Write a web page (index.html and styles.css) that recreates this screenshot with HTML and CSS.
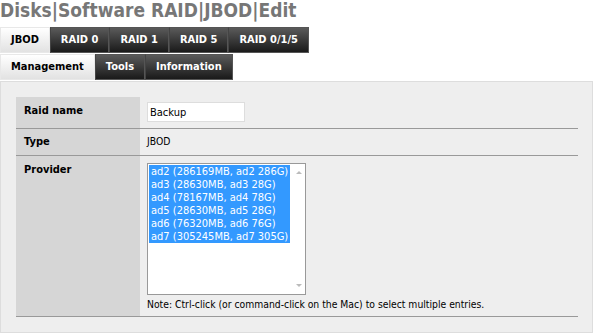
FILE: index.html
```html
<!DOCTYPE html>
<html lang="en">
<head>
    <meta charset="UTF-8">
    <title>Disks | Software RAID | JBOD | Edit</title>
    <link rel="stylesheet" href="styles.css">
</head>
<body>

<h1 class="page-title">Disks|Software RAID|JBOD|Edit</h1>

<ul class="tabs">
    <li class="active">JBOD</li>
    <li>RAID 0</li>
    <li>RAID 1</li>
    <li>RAID 5</li>
    <li>RAID 0/1/5</li>
</ul>
<ul class="tabs">
    <li class="active">Management</li>
    <li>Tools</li>
    <li>Information</li>
</ul>

<div class="panel">
    <table class="form-table">
        <tr>
            <td class="label">Raid name</td>
            <td class="value"><input type="text" class="text-input" value="Backup"></td>
        </tr>
        <tr>
            <td class="label">Type</td>
            <td class="value">JBOD</td>
        </tr>
        <tr>
            <td class="label">Provider</td>
            <td class="value">
                <div class="listbox">
                    <div class="options">
                        <div class="option selected">ad2 (286169MB, ad2 286G)</div>
                        <div class="option selected">ad3 (28630MB, ad3 28G)</div>
                        <div class="option selected">ad4 (78167MB, ad4 78G)</div>
                        <div class="option selected">ad5 (28630MB, ad5 28G)</div>
                        <div class="option selected">ad6 (76320MB, ad6 76G)</div>
                        <div class="option selected">ad7 (305245MB, ad7 305G)</div>
                    </div>
                    <div class="scrollbar">
                        <span class="arrow up"></span>
                        <span class="arrow down"></span>
                    </div>
                </div>
                <div class="note">Note: Ctrl-click (or command-click on the Mac) to select multiple entries.</div>
            </td>
        </tr>
    </table>
</div>

</body>
</html>
```

FILE: styles.css
```css
body {
    font-family: 'DejaVu Sans Condensed', 'DejaVu Sans', sans-serif;
    margin: 0;
    padding: 0;
    background-color: #fff;
    color: #000;
}
.page-title {
    font-size: 19px;
    line-height: 20px;
    color: #777;
    margin: 0 0 7px 0;
    padding: 0;
}
.tabs {
    list-style: none;
    margin: 0 0 1px 0;
    padding: 0;
    display: flex;
}
.tabs li {
    height: 24px;
    line-height: 24px;
    padding: 0 10px;
    font-size: 11px;
    font-weight: bold;
    color: #fff;
    background: linear-gradient(#5a5a5a, #1a1a1a);
    border: 1px solid #555;
    border-left-color: #444;
}
.tabs li.active {
    color: #000;
    background: linear-gradient(#fff, #e2e2e2);
    border-color: #e8e8e8;
}
.panel {
    background-color: #eee;
    border: 1px solid #ddd;
    width: 561px;
    padding: 15px 15px 15px 15px;
}
.form-table {
    width: 562px;
    border-collapse: collapse;
    font-size: 10.3px;
}
.form-table td {
    border-bottom: 1px solid #999;
    vertical-align: top;
}
.form-table .label {
    width: 108px;
    background-color: #d6d6d6;
    font-size: 11px;
    font-weight: bold;
    padding: 7px 8px;
}
.form-table .value {
    padding: 6px 7px;
}
.form-table tr:nth-child(2) td {
    padding-top: 6px;
    padding-bottom: 7px;
}
.text-input {
    width: 92px;
    height: 16px;
    font-family: inherit;
    font-size: 11px;
    border: 1px solid #ddd;
    padding: 1px 2px;
    margin: -1px 0 0 0;
    display: block;
}
.listbox {
    display: flex;
    width: 157px;
    height: 130px;
    border: 1px solid #999;
    background-color: #fff;
    margin-top: 1px;
}
.options {
    flex: 1;
    padding: 1px;
}
.option {
    font-size: 11px;
    line-height: 13px;
    padding: 0 2px;
    white-space: nowrap;
}
.option.selected {
    background-color: #3399ff;
    color: #fff;
}
.scrollbar {
    width: 16px;
    position: relative;
}
.arrow {
    position: absolute;
    left: 5px;
    width: 0;
    height: 0;
    border-left: 3px solid transparent;
    border-right: 3px solid transparent;
}
.arrow.up {
    top: 7px;
    border-bottom: 3px solid #bbb;
}
.arrow.down {
    bottom: 7px;
    border-top: 3px solid #bbb;
}
.note {
    margin-top: 3px;
    line-height: 12px;
}
```
